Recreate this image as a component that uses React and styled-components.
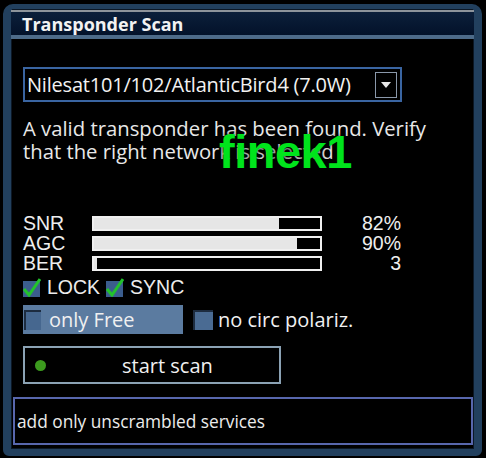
import React from "react";
import styled, { createGlobalStyle } from "styled-components";

const GlobalStyle = createGlobalStyle`
    html, body {
        margin: 0;
        padding: 0;
        background: #000;
    }
    body {
        width: 486px;
        height: 458px;
        overflow: hidden;
        font-family: "Open Sans", "DejaVu Sans", sans-serif;
        color: #ececec;
    }
`;

const Window = styled.div`
    position: relative;
    box-sizing: border-box;
    margin: 4px 0 0 3px;
    width: 479px;
    height: 452px;
    border: 8px solid #22405e;
    border-top-width: 5px;
    border-bottom-width: 7px;
    border-radius: 10px 10px 6px 6px;
    background: #000;
    display: flex;
    flex-direction: column;
    box-shadow: inset 0 0 0 1px #0c1826;
`;

const TitleBar = styled.div`
    margin-top: 1px;
    height: 23px;
    border-top: 2px solid #8d949b;
    border-bottom: 4px solid #4d6b89;
    background: linear-gradient(#0b1f3a, #03122a);
    display: flex;
    align-items: center;
    padding-left: 11px;
    font-weight: 700;
    font-size: 18px;
    color: #f2f2f2;
`;

const Content = styled.div`
    flex: 1;
    display: flex;
    flex-direction: column;
    align-items: flex-start;
    padding: 28px 0 0 12px;
`;

const Dropdown = styled.div`
    box-sizing: border-box;
    width: 379px;
    height: 35px;
    border: 2px solid #3a65a2;
    display: flex;
    align-items: center;
    justify-content: space-between;
    padding: 0 3px 0 2px;
    font-size: 20px;
    letter-spacing: -0.2px;
    color: #f2f2f2;
`;

const ArrowBox = styled.div`
    box-sizing: border-box;
    width: 22px;
    height: 26px;
    border: 1px solid #8a98aa;
    display: flex;
    align-items: center;
    justify-content: center;
    &::after {
        content: "";
        border-left: 5px solid transparent;
        border-right: 5px solid transparent;
        border-top: 6px solid #e8e8e8;
    }
`;

const Message = styled.p`
    margin: 15px 0 0 0;
    font-size: 20.3px;
    line-height: 23px;
    color: #e8e8e8;
`;

const SignalGrid = styled.div`
    margin-top: 50px;
    display: grid;
    grid-template-columns: 69px 230px 79px;
    grid-auto-rows: 20px;
    align-items: center;
    font-family: "Liberation Sans", Arial, sans-serif;
    font-size: 19.5px;
    color: #eeeeee;
`;

const Label = styled.span`
    line-height: 20px;
`;

const Value = styled.span`
    text-align: right;
    line-height: 20px;
`;

const Bar = styled.div`
    box-sizing: border-box;
    height: 15px;
    border: 2px solid #f0f0f0;
    background: #000;
    display: flex;
`;

const Fill = styled.div`
    background: #e6e6e6;
`;

const StatusRow = styled.div`
    margin-top: 3px;
    display: flex;
    align-items: center;
    gap: 6px;
    font-family: "Liberation Sans", Arial, sans-serif;
    font-size: 19.5px;
    height: 22px;
`;

const Status = styled.span`
    display: flex;
    align-items: center;
    gap: 6px;
`;

const OptionRow = styled.div`
    margin-top: 7px;
    display: flex;
    align-items: center;
    gap: 9px;
    font-size: 20px;
`;

const Option = styled.div`
    box-sizing: border-box;
    height: 29px;
    width: ${(p) => (p.$focused ? "160px" : "auto")};
    display: flex;
    align-items: center;
    gap: ${(p) => (p.$focused ? "8px" : "5px")};
    padding-left: 1px;
    background: ${(p) => (p.$focused ? "#5b7ba0" : "transparent")};
    color: #f0f0f0;
`;

const Box = styled.span`
    box-sizing: border-box;
    display: inline-block;
    width: ${(p) => (p.$focused ? "17px" : "20px")};
    height: 20px;
    background: ${(p) => (p.$focused ? "#46678f" : "#4a6b93")};
    border-top: 2px solid #1d2c40;
    border-left: 2px solid #1d2c40;
`;

const ScanButton = styled.button`
    margin-top: 12px;
    box-sizing: border-box;
    width: 258px;
    height: 38px;
    border: 2px solid #8ba2b4;
    background: #000;
    display: flex;
    align-items: center;
    padding: 0 0 0 10px;
    font-family: "Open Sans", "DejaVu Sans", sans-serif;
    font-size: 20px;
    color: #f0f0f0;
`;

const Dot = styled.span`
    width: 11px;
    height: 11px;
    border-radius: 50%;
    background: #3c9a1e;
`;

const ButtonText = styled.span`
    margin-left: 76px;
`;

const HelpBox = styled.div`
    box-sizing: border-box;
    margin: 0 1px 4px 2px;
    height: 48px;
    border: 2px solid #5867ad;
    display: flex;
    align-items: center;
    padding-left: 2px;
    font-size: 17.3px;
    color: #ececec;
`;

const Watermark = styled.div`
    position: absolute;
    left: 208px;
    top: 115px;
    font-family: "Liberation Sans", Arial, sans-serif;
    font-weight: 700;
    font-size: 47px;
    color: #00e41c;
    text-shadow: 0 0 6px rgba(0, 0, 0, 0.8);
    letter-spacing: -0.5px;
`;

const Check = () => (
    <svg width="18" height="19" viewBox="0 0 18 19">
        <rect x="0" y="3" width="17" height="16" fill="#3b5d8d" />
        <path d="M1 11 L6 17 L17 1" stroke="#22c22c" strokeWidth="3" fill="none" />
    </svg>
);

const signals = [
    { label: "SNR", value: 82, text: "82%" },
    { label: "AGC", value: 90, text: "90%" },
    { label: "BER", value: 1.4, text: "3" },
];

const App = () => {
    return (
        <>
            <GlobalStyle />
            <Window>
                <TitleBar>Transponder Scan</TitleBar>
                <Content>
                    <Dropdown>
                        Nilesat101/102/AtlanticBird4 (7.0W)
                        <ArrowBox />
                    </Dropdown>
                    <Message>
                        A valid transponder has been found. Verify
                        <br />
                        that the right network is selected
                    </Message>
                    <SignalGrid>
                        {signals.map((s) => (
                            <React.Fragment key={s.label}>
                                <Label>{s.label}</Label>
                                <Bar>
                                    <Fill style={{ width: `${s.value}%` }} />
                                </Bar>
                                <Value>{s.text}</Value>
                            </React.Fragment>
                        ))}
                    </SignalGrid>
                    <StatusRow>
                        <Status><Check />LOCK</Status>
                        <Status><Check />SYNC</Status>
                    </StatusRow>
                    <OptionRow>
                        <Option $focused>
                            <Box $focused />
                            only Free
                        </Option>
                        <Option>
                            <Box />
                            no circ polariz.
                        </Option>
                    </OptionRow>
                    <ScanButton>
                        <Dot />
                        <ButtonText>start scan</ButtonText>
                    </ScanButton>
                </Content>
                <HelpBox>add only unscrambled services</HelpBox>
                <Watermark>finek1</Watermark>
            </Window>
        </>
    );
};

export default App;
